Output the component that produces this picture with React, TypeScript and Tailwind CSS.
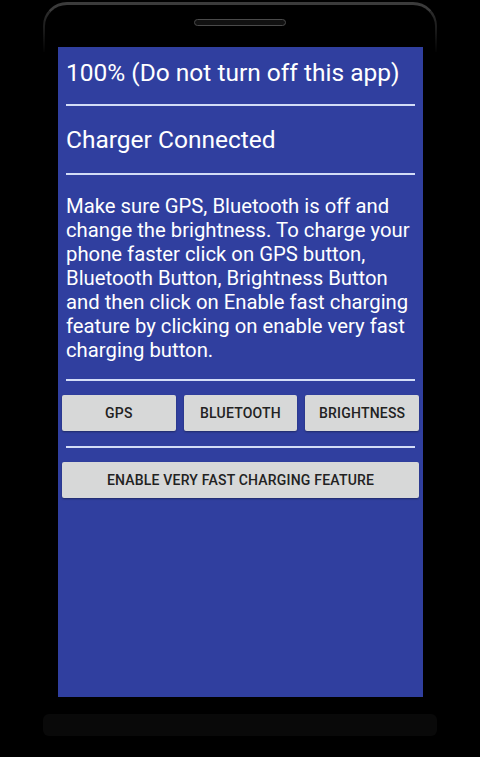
import React from "react";

const Divider = () => <div className="mx-2 h-[2px] bg-[#d3ddf7]" />;

const PhoneButton = ({ label, className = "" }: { label: string; className?: string }) => (
  <button
    type="button"
    className={`h-[36px] rounded-[2px] bg-[#d7d8d8] text-[14px] font-medium uppercase tracking-[0.2px] text-[#222] shadow-[0_1px_2px_rgba(0,0,0,0.35)] ${className}`}
  >
    {label}
  </button>
);

export default function App() {
  return (
    <div
      className="relative h-[757px] w-[480px] overflow-hidden bg-black"
      style={{ fontFamily: "Roboto, 'Noto Sans', sans-serif" }}
    >
      {/* Frame outline, fading down the sides */}
      <div className="absolute left-[43px] top-[2px] h-[50px] w-[394px] rounded-t-[24px] border-x-2 border-t-[3px] border-x-[#2a2a2a] border-t-[#3b3b3b]" />
      <div className="absolute left-[40px] top-[14px] h-[40px] w-[400px] bg-linear-to-b from-transparent to-black" />
      {/* Speaker */}
      <div className="absolute left-[194px] top-[19px] h-[7px] w-[92px] rounded-full border border-[#4a4a4a] bg-[#111]" />
      {/* Bottom bar */}
      <div className="absolute left-[43px] top-[714px] h-[22px] w-[394px] rounded-[6px] bg-[#090909]" />

      {/* Screen */}
      <div className="absolute left-[58px] top-[47px] flex h-[650px] w-[365px] flex-col bg-[#303f9f] text-white">
        <div className="mt-[10px] px-2 text-[24.5px] leading-[32px]">100% (Do not turn off this app)</div>
        <div className="mt-[15px]">
          <Divider />
        </div>
        <div className="mt-[18px] px-2 text-[24.5px] leading-[32px]">Charger Connected</div>
        <div className="mt-[17px]">
          <Divider />
        </div>
        <div className="mt-[19px] px-2 text-[20.3px] leading-[24px]">
          Make sure GPS, Bluetooth is off and change the brightness. To charge your phone faster click on GPS button,
          Bluetooth Button, Brightness Button and then click on Enable fast charging feature by clicking on enable very
          fast charging button.
        </div>
        <div className="mt-[17px]">
          <Divider />
        </div>
        <div className="mt-[14px] flex gap-[8px] px-[4px]">
          <PhoneButton label="GPS" className="flex-1" />
          <PhoneButton label="Bluetooth" className="flex-1" />
          <PhoneButton label="Brightness" className="flex-1" />
        </div>
        <div className="mt-[15px]">
          <Divider />
        </div>
        <div className="mt-[14px] flex px-[4px]">
          <PhoneButton label="Enable very fast charging feature" className="flex-1" />
        </div>
      </div>
    </div>
  );
}
